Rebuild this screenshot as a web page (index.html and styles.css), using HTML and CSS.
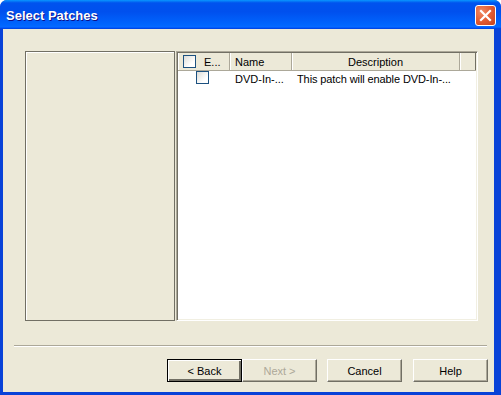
FILE: index.html
```html
<!DOCTYPE html>
<html lang="en">

<head>
  <meta charset="UTF-8" />
  <title>Select Patches</title>
  <link rel="stylesheet" href="styles.css">
</head>

<body>
  <div class="window">
    <div class="titlebar">
      <span class="title">Select Patches</span>
      <div class="close-btn">
        <svg width="13" height="13" viewBox="0 0 13 13">
          <path d="M2 2 L11 11 M11 2 L2 11" stroke="#fff" stroke-width="2.2" stroke-linecap="square" />
        </svg>
      </div>
    </div>
    <div class="client">
      <div class="panes">
        <div class="left-pane"></div>
        <div class="list">
          <div class="list-header">
            <div class="col col-check"><span class="checkbox"></span><span class="col-text">E...</span></div>
            <div class="col col-name">Name</div>
            <div class="col col-desc">Description</div>
            <div class="col col-fill"></div>
          </div>
          <div class="list-row">
            <div class="cell cell-check"><span class="checkbox"></span></div>
            <div class="cell cell-name">DVD-In-...</div>
            <div class="cell cell-desc">This patch will enable DVD-In-...</div>
          </div>
        </div>
      </div>
      <div class="separator"></div>
      <div class="buttons">
        <button class="btn default">&lt; Back</button>
        <button class="btn" disabled>Next &gt;</button>
        <button class="btn cancel">Cancel</button>
        <button class="btn help">Help</button>
      </div>
    </div>
  </div>
</body>

</html>
```

FILE: styles.css
```css
body {
  margin: 0;
  padding: 0;
  font-family: "Liberation Sans", Arial, sans-serif;
  font-size: 11px;
  background: #fff;
}

.window {
  width: 501px;
  height: 395px;
  box-sizing: border-box;
  display: flex;
  flex-direction: column;
  background: #0842d8;
  border-radius: 7px 7px 0 0;
  overflow: hidden;
}

/* Luna style caption */
.titlebar {
  height: 29px;
  flex: none;
  display: flex;
  align-items: center;
  justify-content: space-between;
  padding: 0 5px 0 6px;
  background: linear-gradient(#0997ff 0, #0053ee 10%, #0050ee 40%, #0066ff 86%, #066aff 92%, #005bff 95%, #003dd7 100%);
}

.title {
  color: #fff;
  font-weight: bold;
  font-size: 13px;
  text-shadow: 1px 1px #0f1089;
  margin-top: 1px;
}

.close-btn {
  width: 21px;
  height: 21px;
  box-sizing: border-box;
  border: 1px solid #fff;
  border-radius: 3px;
  background: radial-gradient(circle at 30% 30%, #f08a64 0, #e35c33 50%, #c4421e 100%);
  display: flex;
  align-items: center;
  justify-content: center;
  margin-top: 1px;
}

.client {
  flex: 1;
  margin: 0 7px 3px 3px;
  background: #ece9d8;
  padding-top: 22px;
}

.panes {
  display: flex;
  height: 270px;
  margin-left: 22px;
  gap: 1px;
}

.left-pane {
  width: 150px;
  box-sizing: border-box;
  border: 1px solid #716f64;
  box-shadow: inset 1px 1px #fff;
}

.list {
  width: 302px;
  box-sizing: border-box;
  background: #fff;
  border-top: 1px solid #aca899;
  border-left: 1px solid #aca899;
  border-right: 1px solid #fff;
  border-bottom: 1px solid #fff;
  box-shadow: inset 1px 1px #716f64, inset -1px -1px #f1efe2;
}

.list-header {
  display: flex;
  height: 17px;
  margin: 1px 1px 0 1px;
  background: #ece9d8;
  border-bottom: 1px solid #aca899;
}

.col {
  box-sizing: border-box;
  display: flex;
  align-items: center;
  border-right: 1px solid #aca899;
  box-shadow: inset 1px 0 #fff;
  color: #000;
}

.col-check {
  width: 52px;
  padding-left: 5px;
}

.col-text {
  margin-left: 8px;
}

.col-name {
  width: 62px;
  padding-left: 5px;
}

.col-desc {
  width: 168px;
  justify-content: center;
}

.col-fill {
  flex: 1;
  border-right: 1px solid #716f64;
}

.checkbox {
  display: inline-block;
  width: 13px;
  height: 13px;
  box-sizing: border-box;
  border: 1px solid #1c5180;
  background: linear-gradient(135deg, #dcdcd7 0, #fff 70%);
}

.list-row {
  display: flex;
  height: 16px;
  margin: 0 1px;
  align-items: center;
}

.cell-check {
  width: 52px;
  padding-left: 18px;
  box-sizing: border-box;
  display: flex;
  align-self: flex-start;
}

.cell-name {
  width: 62px;
  padding-left: 5px;
  box-sizing: border-box;
}

.cell-desc {
  padding-left: 5px;
  letter-spacing: -0.1px;
}

.separator {
  margin: 24px 0 0 11px;
  width: 473px;
  height: 2px;
  box-sizing: border-box;
  border-top: 1px solid #aca899;
  border-bottom: 1px solid #fff;
}

.buttons {
  display: flex;
  margin-top: 12px;
  padding-left: 164px;
}

/* classic 3D push buttons */
.btn {
  width: 75px;
  height: 23px;
  box-sizing: border-box;
  font-family: "Liberation Sans", Arial, sans-serif;
  font-size: 11px;
  color: #000;
  background: #ece9d8;
  border: 1px solid;
  border-color: #fff #716f64 #716f64 #fff;
  box-shadow: inset -1px -1px #aca899;
  padding: 0;
}

.btn.default {
  border: 1px solid #000;
  box-shadow: inset 1px 1px #fff, inset -2px -2px #716f64, inset -1px -1px #aca899;
}

.btn:disabled {
  color: #aca899;
}

.btn.cancel {
  margin-left: 10px;
}

.btn.help {
  margin-left: 11px;
}
```
